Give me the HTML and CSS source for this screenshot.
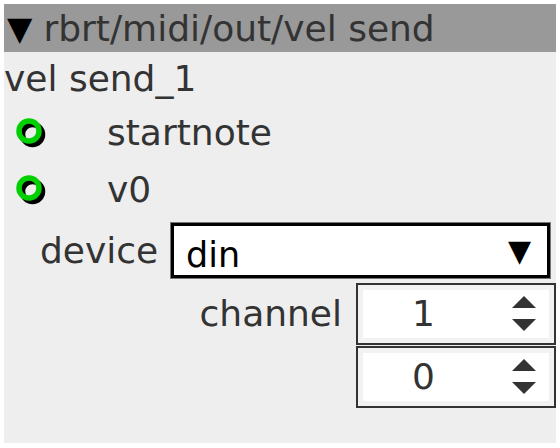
FILE: index.html
```html
<!DOCTYPE html>
<html lang="en">
<head>
	<meta charset="UTF-8">
	<title>vel send</title>
	<link rel="stylesheet" href="styles.css">
</head>
<body>
	<div class="panel">
		<div class="titlebar">
			<span class="fold">&#9660;</span>
			<span class="title">rbrt/midi/out/vel send</span>
		</div>
		<div class="name">vel send_1</div>
		<div class="inlet">
			<svg class="jack" width="36" height="36" viewBox="0 0 36 36">
				<circle cx="17.5" cy="17.5" r="10" fill="none" stroke="#000" stroke-width="5.5"/>
				<circle cx="14" cy="14" r="10" fill="none" stroke="#00d000" stroke-width="5.5"/>
			</svg>
			<span class="inlet-label">startnote</span>
		</div>
		<div class="inlet">
			<svg class="jack" width="36" height="36" viewBox="0 0 36 36">
				<circle cx="17.5" cy="17.5" r="10" fill="none" stroke="#000" stroke-width="5.5"/>
				<circle cx="14" cy="14" r="10" fill="none" stroke="#00d000" stroke-width="5.5"/>
			</svg>
			<span class="inlet-label">v0</span>
		</div>
		<div class="param device">
			<span class="param-label">device</span>
			<div class="select">
				<span class="select-value">din</span>
				<span class="select-arrow">&#9660;</span>
			</div>
		</div>
		<div class="param channel">
			<span class="param-label">channel</span>
			<div class="spin">
				<span class="spin-value">1</span>
				<span class="spin-arrows"><i class="up"></i><i class="down"></i></span>
			</div>
		</div>
		<div class="param channel">
			<span class="param-label"></span>
			<div class="spin">
				<span class="spin-value">0</span>
				<span class="spin-arrows"><i class="up"></i><i class="down"></i></span>
			</div>
		</div>
	</div>
</body>
</html>
```

FILE: styles.css
```css
*{
	margin: 0;
	padding: 0;
	box-sizing: border-box;
}
body{
	background: #fff;
	padding: 4px;
	font-family: "DejaVu Sans", sans-serif;
	font-size: 36px;
	color: #333;
}
.panel{
	width: 552px;
	height: 439px;
	background: #eee;
}
.titlebar{
	height: 48px;
	background: #999;
	display: flex;
	align-items: center;
	padding-left: 3px;
	gap: 11px;
}
.fold{
	color: #000;
	font-size: 33px;
}
.name{
	height: 52px;
	display: flex;
	align-items: center;
}
.inlet{
	height: 57px;
	display: flex;
	align-items: center;
	padding-left: 11px;
}
.jack{
	display: block;
	margin-top: 5px;
}
.inlet-label{
	margin-left: 56px;
}
.param{
	display: flex;
	align-items: center;
}
.device{
	height: 64px;
	padding-left: 36px;
}
.device .param-label{
	width: 131px;
}
.select{
	width: 379px;
	height: 55px;
	border: 3px solid #000;
	outline: 1px solid #777;
	background: #fff;
	color: #000;
	display: flex;
	align-items: center;
	justify-content: space-between;
	padding: 9px 16px 0 12px;
}
.select-value{
	font-size: 35px;
}
.select-arrow{
	font-size: 30px;
	padding-bottom: 9px;
}
.channel{
	height: 63px;
	justify-content: flex-end;
}
.channel .param-label{
	margin-right: 14px;
}
.spin{
	width: 200px;
	height: 62px;
	border: 2px solid #333;
	background: #fff;
	box-shadow: inset 0 0 0 5px #f2f2f2;
	display: flex;
	align-items: center;
	padding-left: 54px;
	padding-right: 18px;
}
.spin-value{
	flex: 1;
}
.spin-arrows{
	display: flex;
	flex-direction: column;
	gap: 11px;
}
.spin-arrows i{
	display: block;
	width: 0;
	height: 0;
	border-left: 12px solid transparent;
	border-right: 12px solid transparent;
}
.spin-arrows .up{
	border-bottom: 12px solid #333;
}
.spin-arrows .down{
	border-top: 12px solid #333;
}
```
